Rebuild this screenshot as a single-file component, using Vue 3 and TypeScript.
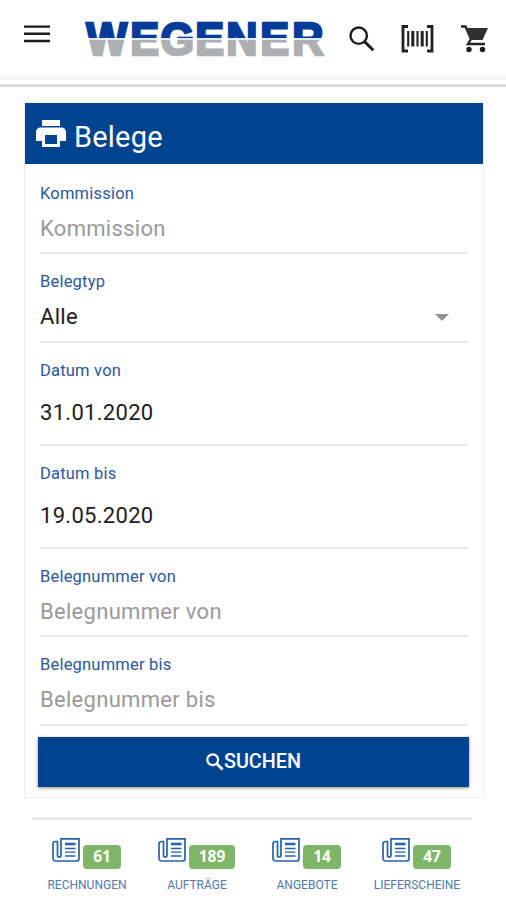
<script setup lang="ts">
interface Field {
  label: string
  value: string
  kind: 'input' | 'select' | 'date'
  height: number
}

interface DocumentLink {
  name: string
  count: number
}

const fields: Field[] = [
  { label: 'Kommission', value: '', kind: 'input', height: 90 },
  { label: 'Belegtyp', value: 'Alle', kind: 'select', height: 89 },
  { label: 'Datum von', value: '31.01.2020', kind: 'date', height: 103 },
  { label: 'Datum bis', value: '19.05.2020', kind: 'date', height: 103 },
  { label: 'Belegnummer von', value: '', kind: 'input', height: 88 },
  { label: 'Belegnummer bis', value: '', kind: 'input', height: 89 },
]

const links: DocumentLink[] = [
  { name: 'Rechnungen', count: 61 },
  { name: 'Aufträge', count: 189 },
  { name: 'Angebote', count: 14 },
  { name: 'Lieferscheine', count: 47 },
]
</script>

<template>
  <div class="page">
    <header class="topbar">
      <svg class="menu" viewBox="0 0 26 18"><path d="M0 1.600H26M0 8.800H26M0 16H26" stroke="#1c1c1c" stroke-width="2.400" /></svg>
      <svg class="logo" viewBox="0 0 242 40">
        <defs>
          <linearGradient id="brand" gradientUnits="userSpaceOnUse" x1="0" y1="0" x2="0" y2="40">
            <stop offset="0.510" stop-color="#063c99" />
            <stop offset="0.510" stop-color="#e4e9ef" />
            <stop offset="0.545" stop-color="#e4e9ef" />
            <stop offset="0.545" stop-color="#adafb0" />
          </linearGradient>
        </defs>
        <text class="wordmark" transform="scale(0.93 1)" x="2.400 49.800 82.200 119.700 153 189.600 224" y="36.800" fill="url(#brand)" stroke="url(#brand)" stroke-width="2.600">WEGENER</text>
      </svg>
      <svg class="search" viewBox="0 0 26 26" fill="none" stroke="#1c1c1c"><circle cx="9.700" cy="9.700" r="8.200" stroke-width="2.400" /><path d="M15.500 15.500L24.300 24.300" stroke-width="3" /></svg>
      <svg class="barcode" viewBox="0 0 33 28" fill="none" stroke="#222"><path d="M7 1.500H2V26H7M26 1.500H31V26H26" stroke-width="2.800" /><path d="M7.200 6V21.500M16.500 6V21.500M25.800 6V21.500" stroke-width="2.100" /><path d="M11.800 6V21.500M21.200 6V21.500" stroke-width="3" /></svg>
      <svg class="cart" viewBox="0 0 27 28">
        <path d="M0 1.500H4.500L10 14L7 19H24" fill="none" stroke="#252525" stroke-width="2.400" />
        <path d="M4.500 3H27L21.500 15H9.500Z" fill="#303030" />
        <circle cx="8" cy="24.500" r="2.700" fill="#1c1c1c" />
        <circle cx="21.500" cy="24.500" r="2.700" fill="#1c1c1c" />
      </svg>
    </header>

    <main class="card">
      <h1 class="title">
        <svg class="printer" viewBox="2 3 20 18" preserveAspectRatio="none" fill="#fff"><path d="M19 8H5c-1.660 0-3 1.340-3 3v6h4v4h12v-4h4v-6c0-1.660-1.340-3-3-3zm-3 11H8v-6h8v6zM18 3H6v4h12V3z" /></svg>
        <span>Belege</span>
      </h1>
      <form class="form" @submit.prevent>
        <div v-for="field in fields" :key="field.label" class="field" :class="field.kind" :style="{ height: field.height + 'px' }">
          <div class="label">{{ field.label }}</div>
          <div class="control" :class="{ empty: !field.value }">
            <span>{{ field.value || field.label }}</span>
            <svg v-if="field.kind === 'select'" class="caret" viewBox="0 0 14 7"><path d="M0 0H14L7 7Z" fill="#929292" /></svg>
          </div>
        </div>
        <button class="submit" type="submit">
          <svg class="submit-icon" viewBox="0 0 18 18" fill="none" stroke="#fff"><circle cx="6.700" cy="6.700" r="5.400" stroke-width="2.200" /><path d="M10.700 10.700L16.600 16.600" stroke-width="2.800" /></svg>
          <span>SUCHEN</span>
        </button>
      </form>
    </main>

    <nav class="documents">
      <a v-for="link in links" :key="link.name" class="document">
        <span class="summary">
          <svg class="paper" viewBox="0 0 28 24" fill="none" stroke="#2862a8">
            <path d="M9 .9H27V20.500Q27 23 24.500 23H4Q1 23 1 20V6Q1 3.500 3.500 3.500H5.500V17Q5.500 19 7.200 19Q9 19 9 17Z" stroke-width="1.700" />
            <path d="M13 6H23.500" stroke-width="2.500" />
            <path d="M13 10.500H23.500M13 14.200H23.500M13 18H23.500" stroke-width="1.300" />
          </svg>
          <span class="badge">{{ link.count }}</span>
        </span>
        <span class="name">{{ link.name }}</span>
      </a>
    </nav>
  </div>
</template>

<style>
body {
  margin: 0;
  background: #fefefe;
}
</style>

<style scoped>
.page {
  box-sizing: border-box;
  width: 506px;
  height: 900px;
  overflow: hidden;
  background: #fefefe;
  font-family: Roboto, "Liberation Sans", sans-serif;
}

svg {
  display: block;
  flex: none;
}

.topbar {
  box-sizing: border-box;
  display: flex;
  align-items: flex-start;
  height: 87px;
  padding: 18px 17px 0 24px;
  border-bottom: 3px solid #dedede;
  background: linear-gradient(#fdfefd 77px, #f5f5f5 77px, #f5f5f5 80px, #fefefe 80px);
}

.menu {
  width: 26px;
  height: 18px;
  margin-top: 7px;
}

.logo {
  width: 242px;
  height: 40px;
  margin-left: 34px;
  overflow: visible;
}

.wordmark {
  font-family: "Liberation Sans", sans-serif;
  font-size: 46.5px;
  font-weight: 700;
}

.search {
  width: 26px;
  height: 26px;
  margin: 8px 0 0 23px;
}

.barcode {
  width: 33px;
  height: 28px;
  margin: 7px 0 0 26px;
}

.cart {
  width: 27px;
  height: 28px;
  margin: 7px 0 0 27px;
}

.card {
  box-sizing: border-box;
  width: 460px;
  height: 696px;
  margin: 15px 0 0 24px;
  border: 1px solid #f0f0f0;
}

.title {
  display: flex;
  align-items: center;
  gap: 8px;
  height: 61px;
  margin: 0;
  padding-left: 11px;
  background: #00438f;
  color: #fff;
  font-size: 29px;
  font-weight: 400;
  letter-spacing: 0.2px;
}

.title span {
  margin-top: 6px;
}

.printer {
  width: 30px;
  height: 27px;
}

.form {
  padding: 0 13px;
}

.field {
  box-sizing: border-box;
  display: flex;
  flex-direction: column;
  margin: 0 2px;
  padding-top: 18px;
  border-bottom: 2px solid #e8e8e8;
}

.field:first-child {
  padding-top: 20px;
}

.label {
  height: 20px;
  color: #2b589d;
  font-size: 16.5px;
  line-height: 20px;
  letter-spacing: 0.2px;
}

.control {
  display: flex;
  align-items: center;
  justify-content: space-between;
  height: 30px;
  padding: 0 19px 0 0;
  color: #1d1d1d;
  font-size: 22px;
  line-height: 30px;
  letter-spacing: 0.3px;
  margin-top: 10px;
}

.control.empty {
  color: #9a9a9a;
}

.date .control {
  margin-top: 17px;
}

.caret {
  width: 14px;
  height: 7px;
}

.submit {
  display: flex;
  align-items: center;
  justify-content: center;
  width: 431px;
  height: 50px;
  margin: 11px 0 0;
  padding: 0 0 1px;
  border: 0;
  background: #00438f;
  box-shadow: 0 1px 3px rgba(0, 0, 0, 0.45);
  color: #fff;
  font-family: inherit;
  font-size: 19.8px;
  font-weight: 500;
}

.submit-icon {
  width: 18px;
  height: 18px;
}

.documents {
  display: grid;
  grid-template-columns: repeat(4, 110px);
  box-sizing: border-box;
  width: 440px;
  height: 82px;
  margin: 19px 0 0 32px;
  padding-top: 19px;
  border-top: 3px solid #e8e8e8;
}

.document {
  display: flex;
  flex-direction: column;
  align-items: center;
}

.summary {
  display: flex;
  align-items: flex-start;
  gap: 3px;
  height: 39px;
}

.paper {
  width: 28px;
  height: 24px;
  margin: -1px 0 0 -1px;
}

.badge {
  height: 24px;
  margin-top: 6px;
  padding: 0 10px;
  border-radius: 4px;
  background: #7fb566;
  color: #fff;
  font-family: "Open Sans", "Noto Sans", sans-serif;
  font-size: 15.5px;
  font-weight: 700;
  line-height: 23px;
}

.name {
  color: #5279b1;
  font-size: 12px;
  line-height: 14px;
  text-transform: uppercase;
}
</style>
